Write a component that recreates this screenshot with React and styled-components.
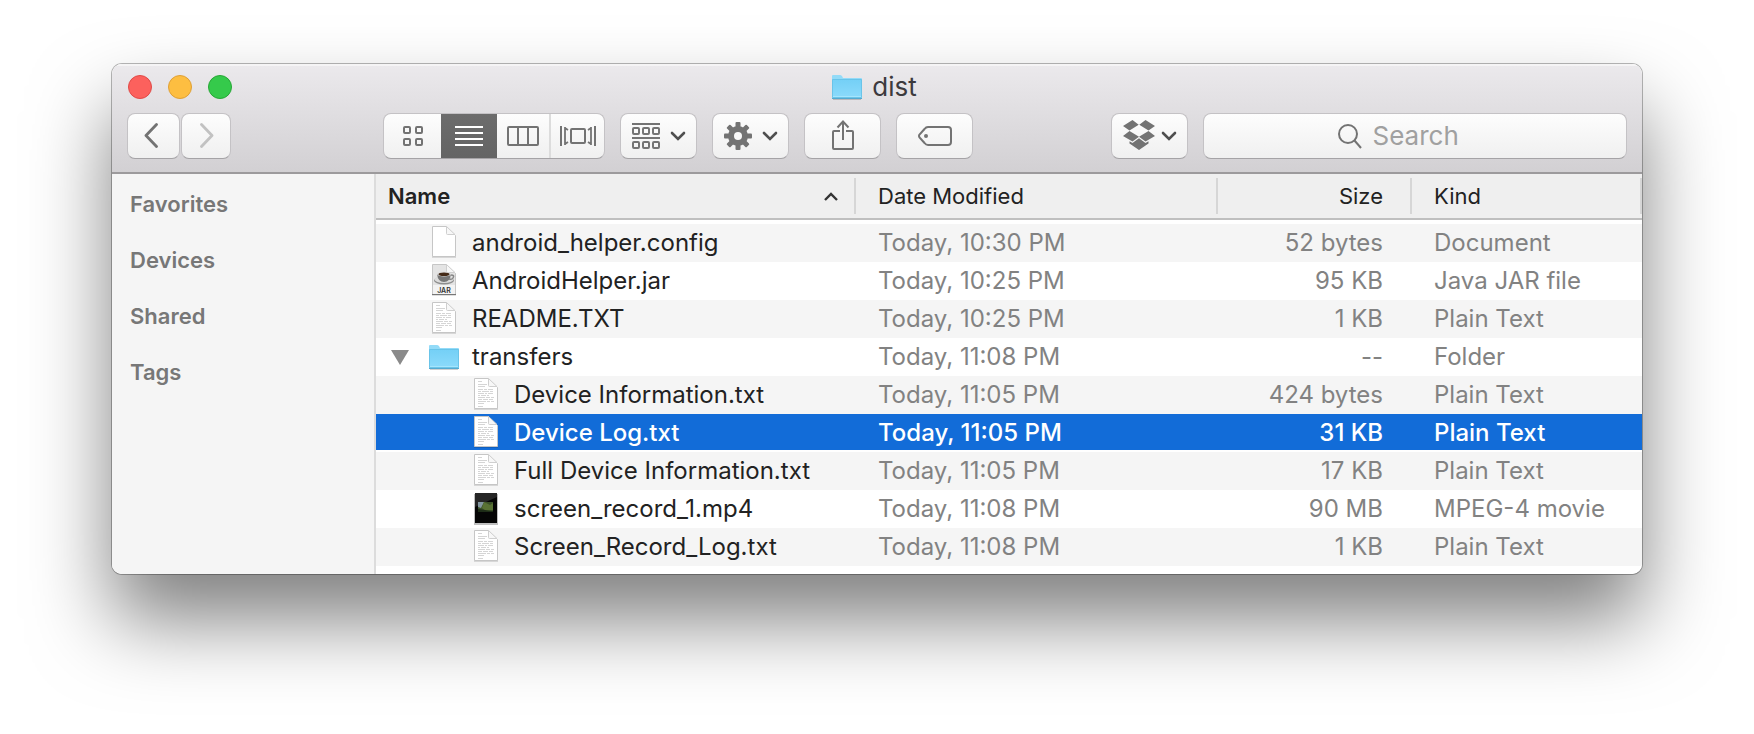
import React, { useState } from "react";
import styled, { createGlobalStyle } from "styled-components";

const Global = createGlobalStyle`
  * { box-sizing: border-box; }
  body { margin: 0; background: #fff; font-family: Inter, "Liberation Sans", sans-serif; }
  button, input { font: inherit; }
`;

const Desktop = styled.main`
  padding: 64px 112px 160px;
`;

const Window = styled.section`
  border-radius: 10px;
  box-shadow: 0 0 0 1px rgba(0, 0, 0, 0.28), 0 46px 80px rgba(0, 0, 0, 0.5);
`;

const Clip = styled.div`
  overflow: hidden;
  border-radius: 10px;
  background: #fff;
`;

const Chrome = styled.header`
  padding: 0 15px 13px;
  background: linear-gradient(#ebe9ec, #d2d0d3);
  border-top: 2px solid #f5f4f5;
  border-bottom: 2px solid #9c9a9c;
`;

const TitleBar = styled.div`
  display: grid;
  grid-template-columns: 1fr auto 1fr;
  align-items: center;
  height: 41px;
  margin-bottom: 6px;
`;

const Lights = styled.div`
  display: flex;
  gap: 16px;
  padding-left: 1px;
`;

const Light = styled.button`
  width: 24px;
  height: 24px;
  padding: 0;
  border: 1px solid ${(p) => p.$edge};
  border-radius: 50%;
  background: ${(p) => p.$fill};
`;

const Title = styled.h1`
  display: flex;
  align-items: center;
  gap: 10px;
  margin: 0;
  padding-right: 5px;
  font-size: 26px;
  line-height: 33px;
  font-weight: 400;
  color: #3c3a3d;
`;

const Toolbar = styled.div`
  display: flex;
  align-items: center;
  gap: 15px;
`;

const NavButtons = styled.div`
  display: flex;
  gap: 1px;
  margin-right: 137px;
`;

const ToolButton = styled.button`
  display: flex;
  align-items: center;
  justify-content: center;
  gap: ${(p) => p.$gap || 10}px;
  flex: none;
  width: ${(p) => p.$width || 77}px;
  height: 46px;
  padding: 0;
  border: 1px solid #c4c2c5;
  border-bottom-color: #a5a3a6;
  border-radius: 8px;
  background: linear-gradient(#fdfdfd, #f0f0f0);
  color: ${(p) => p.$color || "#737373"};
`;

const Segments = styled.div`
  display: grid;
  grid-template-columns: 57px 56px 52px 55px;
  flex: none;
  height: 46px;
  border: 1px solid #c4c2c5;
  border-bottom-color: #a5a3a6;
  border-radius: 8px;
  background: linear-gradient(#fdfdfd, #f0f0f0);
  overflow: hidden;
`;

const Segment = styled.button`
  display: flex;
  align-items: center;
  justify-content: center;
  padding: 0;
  border: 0;
  border-left: ${(p) => (p.$divided ? "2px solid #dcdcdc" : "0")};
  background: ${(p) => (p.$active ? "linear-gradient(#6c6c6c, #646464)" : "none")};
  color: ${(p) => (p.$active ? "#fff" : "#737373")};
`;

const Spacer = styled.div`
  flex: 0 1 108px;
`;

const SearchBox = styled.label`
  display: flex;
  align-items: center;
  justify-content: center;
  gap: 11px;
  flex: 1 1 200px;
  height: 46px;
  border: 1px solid #c4c2c5;
  border-bottom-color: #a5a3a6;
  border-radius: 8px;
  background: linear-gradient(#fdfdfd, #f0f0f0);
  color: #737373;
`;

const SearchInput = styled.input`
  width: 120px;
  padding: 0;
  border: 0;
  outline: 0;
  background: none;
  font-size: 26px;
  line-height: 32px;
  color: #3c3a3d;
  &::placeholder { color: #a0a0a0; opacity: 1; }
`;

const Body = styled.div`
  display: flex;
`;

const Sidebar = styled.nav`
  flex: none;
  width: 264px;
  padding: 2px 18px;
  background: #f5f5f5;
  border-right: 2px solid #dcdcdc;
`;

const SidebarHeading = styled.h2`
  margin: 0;
  font-size: 22px;
  line-height: 56px;
  font-weight: 600;
  color: #777;
`;

const Files = styled.table`
  flex: 1;
  width: 100%;
  table-layout: fixed;
  border-spacing: 0;
  margin-bottom: 8px;
`;

const HeadCell = styled.th`
  width: ${(p) => (p.$width ? p.$width + "px" : "auto")};
  height: 46px;
  padding: 4px 0;
  background: #efefef;
  border-bottom: 2px solid #bfbfbf;
`;

const HeadLabel = styled.div`
  display: flex;
  align-items: center;
  justify-content: ${(p) => (p.$end ? "flex-end" : "space-between")};
  height: 36px;
  padding: 0 ${(p) => (p.$end ? 27 : 16)}px 0 ${(p) => p.$left || 22}px;
  border-right: 2px solid #d6d6d6;
  font-size: 22px;
  line-height: 36px;
  font-weight: ${(p) => (p.$bold ? 600 : 400)};
  color: #222;
`;

const Lead = styled.tr`
  height: 4px;
`;

const Row = styled.tr`
  height: 38px;
  background: ${(p) =>
    p.$selected ? "linear-gradient(#126cd8 36px, #fff 36px)" : p.$striped ? "#f5f5f5" : "#fff"};
  color: ${(p) => (p.$selected ? "#fff" : "#828282")};
  font-weight: ${(p) => (p.$selected ? 500 : 400)};
`;

const Cell = styled.td`
  padding: 0 ${(p) => (p.$end ? 29 : 0)}px 0 ${(p) => (p.$end ? 0 : 22)}px;
  text-align: ${(p) => (p.$end ? "right" : "left")};
  font-size: 24px;
  line-height: 38px;
  white-space: nowrap;
`;

const NameCell = styled(Cell)`
  padding-left: ${(p) => (p.$nested ? 57 : 15)}px;
  color: ${(p) => (p.$selected ? "#fff" : "#222")};
`;

const NameLine = styled.div`
  display: grid;
  grid-template-columns: 38px 30px 1fr;
  align-items: center;
  height: 38px;
`;

const FileLabel = styled.span`
  padding-left: 13px;
`;

const Disclosure = styled.button`
  display: flex;
  grid-column: 1;
  padding: 0;
  border: 0;
  background: none;
`;

const IconSlot = styled.span`
  display: flex;
  grid-column: 2;
  justify-content: center;
`;

const Folder = () => (
  <svg width="30" height="26" viewBox="0 0 30 26" aria-hidden="true">
    <defs>
      <linearGradient id="folder" x1="0" y1="0" x2="0" y2="1">
        <stop offset="0" stopColor="#74d0f6" />
        <stop offset="1" stopColor="#8bdafb" />
      </linearGradient>
    </defs>
    <path d="M0 25V2Q0 1 1 1H8Q9 1 10 2L11 4H29Q30 4 30 5V25Z" fill="#93dbf8" />
    <path d="M.5 5.5H29.500V23.500H.5Z" fill="url(#folder)" stroke="#62bfe5" strokeWidth=".8" />
    <path d="M1 22.500H29" stroke="#a5e5fd" />
    <path d="M0 24.500H30" stroke="#55a9cf" />
    <path d="M1 25.500H29" stroke="#000" opacity=".18" />
  </svg>
);

const Sheet = ({ children, fill = "#fff" }) => (
  <svg width="26" height="36" viewBox="0 0 26 36" aria-hidden="true">
    <path d="M1 2H16L25 11V33H1Z" fill="#000" opacity=".12" />
    <path d="M1.500 1.500H15.500L24.500 10.500V31.500H1.500Z" fill={fill} stroke="#c6c6c6" />
    <path d="M15.500 1.500V8.500Q15.500 9.500 16.500 9.500H24Z" fill="#f7f7f7" stroke="#cfcfcf" />
    {children}
  </svg>
);

const TextSheet = () => (
  <Sheet>
    <g stroke="#c4c4c4" opacity=".7">
      <path d="M5 4.500H9M5 7.500H14M5 9.500H12" />
      <path d="M5 12.500H20" strokeDasharray="5 1 3 1" />
      <path d="M5 14.500H21" strokeDasharray="3 1 7 1" />
      <path d="M5 16.500H20" strokeDasharray="6 1 2 1" />
      <path d="M5 18.500H17" strokeDasharray="2 1 5 1" />
      <path d="M5 20.500H21" strokeDasharray="7 1 4 1" />
      <path d="M5 22.500H20" strokeDasharray="4 1 5 1" />
      <path d="M5 24.500H21" strokeDasharray="8 1 3 1" />
      <path d="M5 26.500H11M5 29.500H10" />
    </g>
  </Sheet>
);

const JarSheet = () => (
  <Sheet fill="#e4e4e4">
    <ellipse cx="13" cy="17.500" rx="10" ry="4" fill="#8d8d8d" />
    <ellipse cx="13" cy="16.500" rx="9.500" ry="3.500" fill="#dcdcdc" />
    <path d="M6 11Q7 19 13 19Q19 19 20 11Z" fill="#777" />
    <path d="M20 12Q24 12 22 15Q21 17 18 16" fill="none" stroke="#888" strokeWidth="1.500" />
    <ellipse cx="13" cy="11" rx="7" ry="2.500" fill="#ddd" />
    <ellipse cx="13" cy="11.300" rx="5.500" ry="1.800" fill="#442a17" />
    <path d="M2 22H24V31H2Z" fill="#f3f3f3" />
    <path d="M1 31.500H25" stroke="#777" />
    <text x="13" y="29.500" textAnchor="middle" fontSize="7" fontWeight="600" fill="#333">JAR</text>
  </Sheet>
);

const Movie = () => (
  <svg width="24" height="34" viewBox="0 0 24 34" aria-hidden="true">
    <path d="M0 2H24V33H0Z" fill="#000" opacity=".25" />
    <path d="M1 1H23V31H1Z" fill="#050505" />
    <path d="M1 1H23V5L1 15Z" fill="#262626" />
    <path d="M4 10H19V20H4Z" fill="#3c5229" />
    <path d="M4 10H10L7 16L4 15Z" fill="#8397a0" />
    <path d="M10 10L16 13L19 11V18L12 19L8 16Z" fill="#597234" />
    <path d="M4 17L11 18L19 19V20H4Z" fill="#1d2c17" />
  </svg>
);

const ChevronDown = () => (
  <svg width="16" height="10" viewBox="0 0 16 10" aria-hidden="true">
    <path d="M2 2L8 8L14 2" fill="none" stroke="#4f4f4f" strokeWidth="2.600" strokeLinecap="round" />
  </svg>
);

const Arrow = ({ back }) => (
  <svg width="20" height="26" viewBox="0 0 20 26" aria-hidden="true">
    <path d={back ? "M12.500 1.500L2 12.500L12.500 23.500" : "M5.500 1.500L16 12.500L5.500 23.500"} fill="none" stroke="currentColor" strokeWidth="2.800" strokeLinecap="round" strokeLinejoin="round" />
  </svg>
);

const squares = (xs, ys) => xs.flatMap((x) => ys.map((y) => <rect key={x + "-" + y} x={x} y={y} width="6" height="6" rx="1" />));

const GridIcon = () => (
  <svg width="20" height="20" viewBox="0 0 20 20" fill="none" stroke="currentColor" strokeWidth="2" aria-hidden="true">
    {squares([1, 13], [1, 13])}
  </svg>
);

const ListIcon = () => (
  <svg width="28" height="20" viewBox="0 0 28 20" stroke="currentColor" strokeWidth="2" aria-hidden="true">
    <path d="M0 1H28M0 7H28M0 13H28M0 19H28" />
  </svg>
);

const ColumnsIcon = () => (
  <svg width="32" height="20" viewBox="0 0 32 20" fill="none" stroke="currentColor" strokeWidth="2" aria-hidden="true">
    <rect x="1" y="1" width="30" height="18" rx="1" />
    <path d="M11 1V19M21 1V19" />
  </svg>
);

const CoverIcon = () => (
  <svg width="36" height="20" viewBox="0 0 36 20" fill="none" stroke="currentColor" strokeWidth="2" aria-hidden="true">
    <rect x="11" y="3" width="14" height="14" rx="1" />
    <path d="M1 0V20M35 0V20" />
    <path d="M5 1V19M5 2L8 4M5 18L8 16M31 1V19M31 2L28 4M31 18L28 16" strokeWidth="1.800" />
  </svg>
);

const ArrangeIcon = () => (
  <svg width="28" height="26" viewBox="0 0 28 26" fill="none" stroke="currentColor" strokeWidth="2" aria-hidden="true">
    <path d="M0 1H28M0 15H28" />
    {squares([1, 11, 21], [5, 19])}
  </svg>
);

const GearIcon = () => (
  <svg width="28" height="28" viewBox="-14 -14 28 28" aria-hidden="true">
    {[0, 45, 90, 135].map((a) => (
      <rect key={a} x="-2.500" y="-14" width="5" height="28" rx="1" fill="currentColor" transform={`rotate(${a})`} />
    ))}
    <circle r="7" fill="none" stroke="currentColor" strokeWidth="6" />
    <circle r="4" fill="#f8f8f8" />
  </svg>
);

const ShareIcon = () => (
  <svg width="24" height="32" viewBox="0 0 24 32" fill="none" stroke="currentColor" strokeWidth="2" aria-hidden="true">
    <path d="M9 11H3Q2 11 2 12V28Q2 29 3 29H21Q22 29 22 28V12Q22 11 21 11H15" />
    <path d="M12 20V2M6.500 7.500L12 1.500L17.500 7.500" />
  </svg>
);

const TagIcon = () => (
  <svg width="34" height="20" viewBox="0 0 34 20" aria-hidden="true">
    <path d="M10 1H30Q33 1 33 4V16Q33 19 30 19H10Q8 19 6.500 17L1.500 11.500Q.5 10 1.500 8.500L6.500 3Q8 1 10 1Z" fill="none" stroke="currentColor" strokeWidth="2" />
    <circle cx="8" cy="10" r="2" fill="currentColor" />
  </svg>
);

const BoxIcon = () => (
  <svg width="32" height="32" viewBox="0 0 32 32" fill="currentColor" aria-hidden="true">
    <path d="M9.500 0L15.700 4.700L6.500 10.500L0 6ZM22.500 0L32 6L25.500 10.500L16.300 4.700ZM6.500 11L16 16.800L9.500 21.500L0 16ZM25.500 11L32 16L22.500 21.500L16 16.800Z" />
    <path d="M16 18.200L22.500 23L25.500 21.200V23.500L16 30L6.500 23.500V21.200L9.500 23Z" />
  </svg>
);

const SearchIcon = () => (
  <svg width="24" height="25" viewBox="0 0 24 25" fill="none" stroke="currentColor" strokeWidth="2" aria-hidden="true">
    <circle cx="10" cy="10" r="9" />
    <path d="M16.500 16.500L23 24" />
  </svg>
);

const SortUp = () => (
  <svg width="14" height="9" viewBox="0 0 14 9" aria-hidden="true">
    <path d="M1 8L7 2L13 8" fill="none" stroke="#333" strokeWidth="2.400" />
  </svg>
);

const icons = { blank: Sheet, text: TextSheet, jar: JarSheet, folder: Folder, movie: Movie };

const files = [
  ["blank", "android_helper.config", "Today, 10:30 PM", "52 bytes", "Document"],
  ["jar", "AndroidHelper.jar", "Today, 10:25 PM", "95 KB", "Java JAR file"],
  ["text", "README.TXT", "Today, 10:25 PM", "1 KB", "Plain Text"],
  ["folder", "transfers", "Today, 11:08 PM", "--", "Folder"],
  ["text", "Device Information.txt", "Today, 11:05 PM", "424 bytes", "Plain Text", true],
  ["text", "Device Log.txt", "Today, 11:05 PM", "31 KB", "Plain Text", true],
  ["text", "Full Device Information.txt", "Today, 11:05 PM", "17 KB", "Plain Text", true],
  ["movie", "screen_record_1.mp4", "Today, 11:08 PM", "90 MB", "MPEG-4 movie", true],
  ["text", "Screen_Record_Log.txt", "Today, 11:08 PM", "1 KB", "Plain Text", true],
];

export default function App() {
  const [selected, setSelected] = useState("Device Log.txt");
  return (
    <>
      <Global />
      <Desktop>
        <Window>
          <Clip>
            <Chrome>
              <TitleBar>
                <Lights>
                  <Light aria-label="Close" $fill="#fc615d" $edge="#e04a47" />
                  <Light aria-label="Minimize" $fill="#fdbe41" $edge="#dfa036" />
                  <Light aria-label="Zoom" $fill="#35ca4b" $edge="#27a736" />
                </Lights>
                <Title><Folder />dist</Title>
              </TitleBar>
              <Toolbar>
                <NavButtons>
                  <ToolButton $width={53} aria-label="Back"><Arrow back /></ToolButton>
                  <ToolButton $width={50} $color="#c2c2c2" aria-label="Forward"><Arrow /></ToolButton>
                </NavButtons>
                <Segments>
                  <Segment aria-label="Icons"><GridIcon /></Segment>
                  <Segment $active aria-label="List"><ListIcon /></Segment>
                  <Segment aria-label="Columns"><ColumnsIcon /></Segment>
                  <Segment $divided aria-label="Cover flow"><CoverIcon /></Segment>
                </Segments>
                <ToolButton aria-label="Arrange"><ArrangeIcon /><ChevronDown /></ToolButton>
                <ToolButton aria-label="Action"><GearIcon /><ChevronDown /></ToolButton>
                <ToolButton aria-label="Share"><ShareIcon /></ToolButton>
                <ToolButton aria-label="Edit tags"><TagIcon /></ToolButton>
                <Spacer />
                <ToolButton $gap={6} aria-label="Dropbox"><BoxIcon /><ChevronDown /></ToolButton>
                <SearchBox>
                  <SearchIcon />
                  <SearchInput type="text" placeholder="Search" aria-label="Search" />
                </SearchBox>
              </Toolbar>
            </Chrome>
            <Body>
              <Sidebar>
                {["Favorites", "Devices", "Shared", "Tags"].map((s) => <SidebarHeading key={s}>{s}</SidebarHeading>)}
              </Sidebar>
              <Files>
                <thead>
                  <tr>
                    <HeadCell><HeadLabel $left={12} $bold>Name<SortUp /></HeadLabel></HeadCell>
                    <HeadCell $width={362}><HeadLabel>Date Modified</HeadLabel></HeadCell>
                    <HeadCell $width={194}><HeadLabel $end>Size</HeadLabel></HeadCell>
                    <HeadCell $width={230}><HeadLabel>Kind</HeadLabel></HeadCell>
                  </tr>
                </thead>
                <tbody>
                  <Lead aria-hidden="true" />
                  {files.map(([icon, name, date, size, kind, nested], i) => {
                    const Icon = icons[icon];
                    const on = name === selected;
                    return (
                      <Row key={name} $striped={i % 2 === 0} $selected={on} onClick={() => setSelected(name)}>
                        <NameCell $nested={nested} $selected={on}>
                          <NameLine>
                            {icon === "folder" && (
                              <Disclosure aria-label="Collapse transfers">
                                <svg width="18" height="15" viewBox="0 0 18 15" aria-hidden="true"><path d="M0 0H18L9 15Z" fill="#8a8a8a" /></svg>
                              </Disclosure>
                            )}
                            <IconSlot><Icon /></IconSlot>
                            <FileLabel>{name}</FileLabel>
                          </NameLine>
                        </NameCell>
                        <Cell>{date}</Cell>
                        <Cell $end>{size}</Cell>
                        <Cell>{kind}</Cell>
                      </Row>
                    );
                  })}
                </tbody>
              </Files>
            </Body>
          </Clip>
        </Window>
      </Desktop>
    </>
  );
}
